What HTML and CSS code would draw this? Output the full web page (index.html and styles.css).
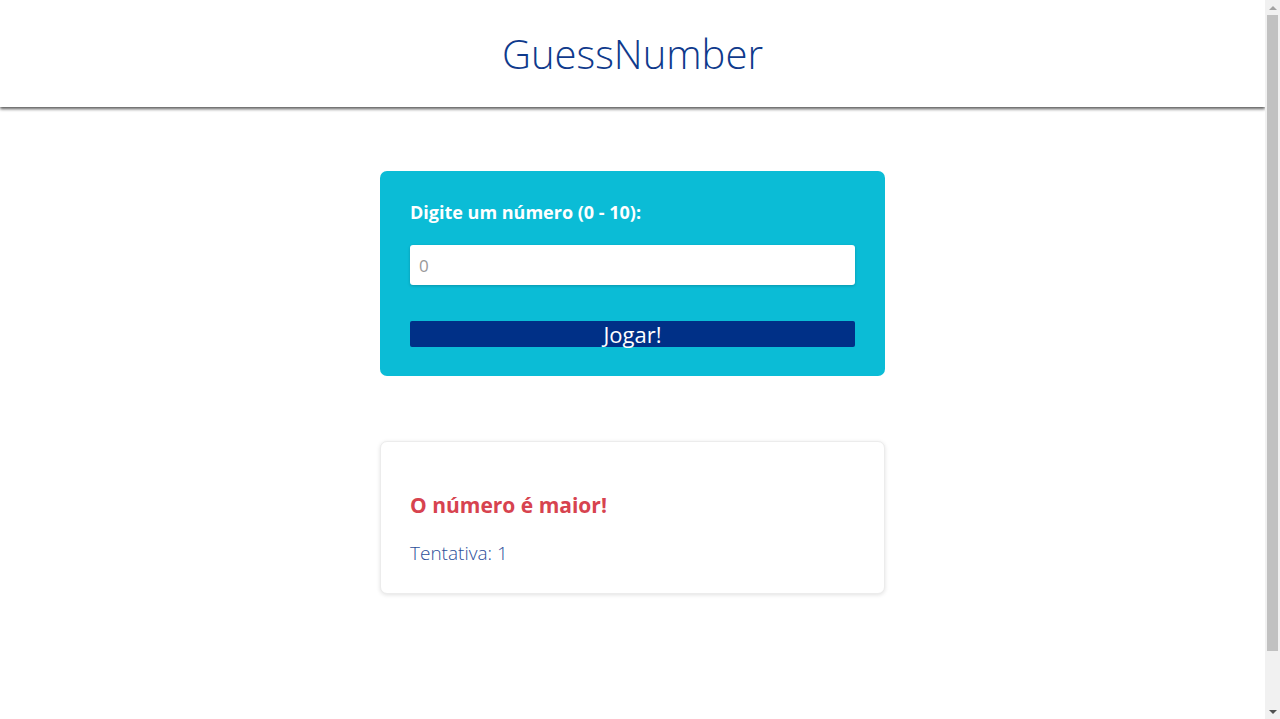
FILE: index.html
```html
<!DOCTYPE html>
<html lang="pt">
<head>
<meta charset="utf-8">
<title>GuessNumber</title>
<link rel="stylesheet" href="styles.css">
</head>
<body>
<header class="topbar">
  <h1 class="title">GuessNumber</h1>
</header>
<main class="content">
  <form class="card card-play">
    <label class="label" for="guess">Digite um número (0 - 10):</label>
    <input class="input" id="guess" type="number" placeholder="0">
    <button class="btn" type="button">Jogar!</button>
  </form>
  <section class="card card-result">
    <h3 class="result">O número é maior!</h3>
    <p class="tries">Tentativa: 1</p>
  </section>
</main>
<div class="scrollbar" aria-hidden="true">
  <div class="sb-arrow sb-up"></div>
  <div class="sb-track"><div class="sb-thumb"></div></div>
  <div class="sb-arrow sb-down"></div>
</div>
</body>
</html>
```
FILE: styles.css
```css
html, body {
  margin: 0;
  padding: 0;
  background: #ffffff;
  font-family: "Open Sans", "Noto Sans", sans-serif;
}
body {
  padding-right: 15px;
}
.topbar {
  height: 107px;
  display: flex;
  align-items: center;
  justify-content: center;
  background: #fff;
  box-shadow: 0 2px 3px rgba(0, 0, 0, 0.65);
  position: relative;
}
.title {
  margin: 0;
  font-size: 40px;
  font-weight: 300;
  color: #0f3a8c;
}
.content {
  display: flex;
  flex-direction: column;
  align-items: center;
  gap: 65px;
  padding: 64px 0 180px;
}
.card {
  width: 505px;
  box-sizing: border-box;
  padding: 30px;
  border-radius: 7px;
}
.card-play {
  background: #0bbcd6;
  display: flex;
  flex-direction: column;
  margin: 0;
  padding-bottom: 29px;
}
.label {
  color: #fff;
  font-weight: 700;
  font-size: 18px;
  line-height: 22px;
  margin-bottom: 22px;
}
.input {
  height: 40px;
  box-sizing: border-box;
  border: none;
  border-radius: 3px;
  padding: 0 9px;
  font-family: inherit;
  font-size: 17px;
  color: #444;
  background: #fff;
  box-shadow: 0 1px 3px rgba(0, 0, 0, 0.2);
  outline: none;
}
.input::placeholder {
  color: #999;
}
.btn {
  margin-top: 36px;
  height: 26px;
  border: none;
  border-radius: 2px;
  background: #003087;
  color: #fff;
  font-family: inherit;
  font-size: 22px;
  line-height: 24px;
  padding: 0;
}
.card-result {
  background: #fff;
  border: 1px solid #ececec;
  box-shadow: 0 1px 4px rgba(0, 0, 0, 0.12);
  padding: 29px;
}
.result {
  margin: 22px 0 0;
  font-size: 21px;
  line-height: 24px;
  font-weight: 700;
  color: #d7434f;
}
.tries {
  margin: 25px 0 0;
  font-size: 19px;
  line-height: 22px;
  font-weight: 300;
  color: #2d4f9a;
}
.scrollbar {
  position: fixed;
  top: 0;
  right: 0;
  bottom: 0;
  width: 15px;
  background: #f1f1f1;
  display: flex;
  flex-direction: column;
  z-index: 10;
}
.sb-arrow {
  height: 15px;
  display: flex;
  align-items: center;
  justify-content: center;
}
.sb-up::before,
.sb-down::before {
  content: "";
  width: 0;
  height: 0;
  border-left: 4px solid transparent;
  border-right: 4px solid transparent;
}
.sb-up::before {
  border-bottom: 4px solid #a3a3a3;
}
.sb-down::before {
  border-top: 4px solid #505050;
}
.sb-track {
  flex: 1;
  padding: 0 2px;
}
.sb-thumb {
  height: 636px;
  background: #c1c1c1;
}
```
